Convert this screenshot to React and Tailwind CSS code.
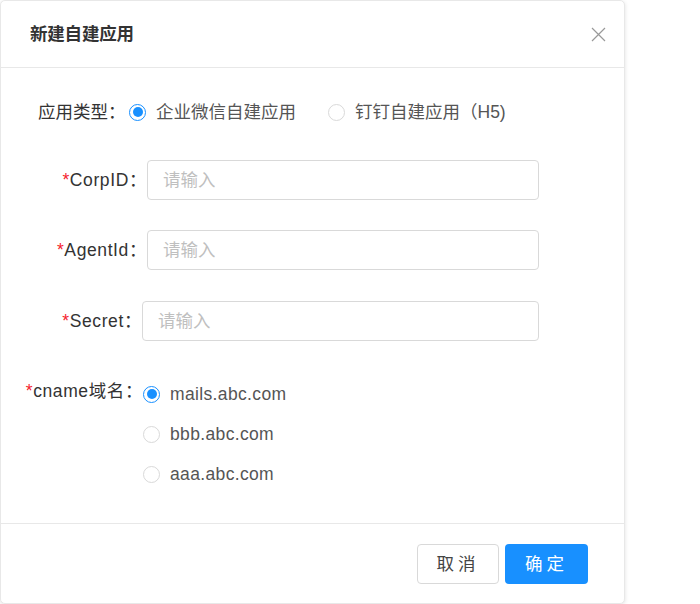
import { useState } from 'react';

const FONT = { fontFamily: '"Liberation Sans", "Noto Sans CJK SC", sans-serif' };

const Radio = ({ checked, label, onClick, wide }) => (
  <div className="flex items-center cursor-pointer" onClick={onClick}>
    <span
      className={`w-[17px] h-[17px] rounded-full border flex items-center justify-center bg-white ${
        checked ? 'border-[#1890ff]' : 'border-[#d9d9d9]'
      }`}
    >
      {checked && <span className="w-[10px] h-[10px] rounded-full bg-[#1890ff]" />}
    </span>
    <span className={`ml-[10px] text-[#555] ${wide ? 'tracking-[0.35px]' : ''}`}>{label}</span>
  </div>
);

const Field = ({ label, labelWidth }) => (
  <div className="flex items-center h-[40px]">
    <label className="text-right text-[#333] shrink-0 tracking-[0.6px]" style={{ width: labelWidth }}>
      <span className="text-[#f5222d]">*</span>
      {label}：
    </label>
    <input
      type="text"
      placeholder="请输入"
      className="h-[40px] flex-1 mr-[85px] px-[15px] border border-[#d9d9d9] rounded-[4px] text-[#333] placeholder-[#bfbfbf] outline-none"
    />
  </div>
);

export default function App() {
  const [appType, setAppType] = useState('wx');
  const [cname, setCname] = useState('mails.abc.com');
  const domains = ['mails.abc.com', 'bbb.abc.com', 'aaa.abc.com'];

  return (
    <div className="w-[700px] h-[604px] bg-white text-[17.5px] leading-[24px]" style={FONT}>
      <div className="w-[625px] h-[604px] bg-white border border-[#e8e8e8] rounded-[5px] shadow-[0_1px_4px_rgba(0,0,0,0.12)] flex flex-col">
        {/* header */}
        <div className="h-[67px] shrink-0 border-b border-[#e8e8e8] flex items-center justify-between pl-[29px] pr-[18px]">
          <h2 className="text-[17.5px] font-semibold text-[#333] tracking-[-0.2px]">新建自建应用</h2>
          <svg width="15" height="15" viewBox="0 0 15 15" className="mt-[1px]">
            <path d="M1 1 L14 14 M14 1 L1 14" stroke="#999" strokeWidth="1.2" fill="none" />
          </svg>
        </div>

        {/* body */}
        <div className="flex-1 pt-[27px] flex flex-col">
          <div className="flex items-center h-[34px] pl-[37px]">
            <span className="text-[#333] w-[91px]">应用类型：</span>
            <Radio checked={appType === 'wx'} label="企业微信自建应用" onClick={() => setAppType('wx')} />
            <div className="ml-[32px]">
              <Radio checked={appType === 'dd'} label="钉钉自建应用（H5)" onClick={() => setAppType('dd')} />
            </div>
          </div>

          <div className="mt-[31px]">
            <Field label="CorpID" labelWidth={146} />
          </div>
          <div className="mt-[30px]">
            <Field label="AgentId" labelWidth={146} />
          </div>
          <div className="mt-[31px]">
            <Field label="Secret" labelWidth={141} />
          </div>

          <div className="mt-[33px] flex">
            <label className="w-[142px] text-right text-[#333] shrink-0 pt-[5px] tracking-[0.6px]">
              <span className="text-[#f5222d]">*</span>cname域名：
            </label>
            <div className="flex flex-col">
              {domains.map((d) => (
                <div key={d} className="h-[40px] flex items-center">
                  <Radio wide checked={cname === d} label={d} onClick={() => setCname(d)} />
                </div>
              ))}
            </div>
          </div>
        </div>

        {/* footer */}
        <div className="h-[80px] shrink-0 border-t border-[#e8e8e8] flex justify-end items-start pt-[20px] pr-[36px] gap-[6px]">
          <button className="w-[82px] h-[40px] rounded-[4px] border border-[#d9d9d9] bg-white text-[#444] tracking-[4px]">
            取消
          </button>
          <button className="w-[83px] h-[40px] rounded-[4px] bg-[#1890ff] text-white tracking-[4px]">
            确定
          </button>
        </div>
      </div>
    </div>
  );
}
